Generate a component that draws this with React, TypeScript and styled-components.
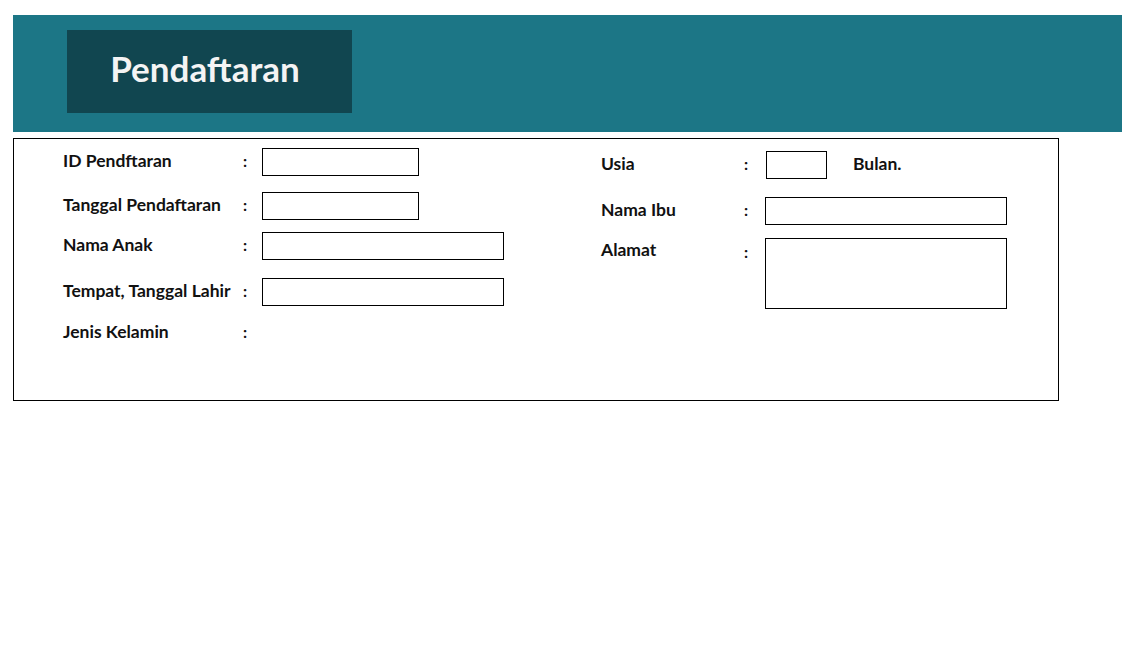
import React from "react";
import styled, { createGlobalStyle } from "styled-components";

const Global = createGlobalStyle`
  html, body { margin: 0; padding: 0; background: #ffffff; }
  body { font-family: "Lato", "Noto Sans", sans-serif; color: #111; }
  * { box-sizing: border-box; }
`;

const Page = styled.div`
  padding: 15px 0 0 13px;
  width: 1139px;
  height: 655px;
`;

const Header = styled.header`
  width: 1109px;
  height: 117px;
  background: #1c7686;
  padding: 15px 0 0 54px;
`;

const TitleBox = styled.div`
  width: 285px;
  height: 83px;
  background: #114650;
  display: flex;
  align-items: center;
  justify-content: center;
  padding: 0 9px 8px 0;
`;

const Title = styled.h1`
  margin: 0;
  font-family: "Lato", sans-serif;
  font-weight: 700;
  font-size: 35px;
  color: #f4f4f4;
`;

const FormBox = styled.section`
  margin-top: 6px;
  width: 1046px;
  height: 263px;
  border: 1px solid #000;
  display: grid;
  grid-template-columns: 538px 1fr;
  padding-left: 49px;
`;

const Column = styled.div`
  display: flex;
  flex-direction: column;
`;

const Row = styled.div<{ $gap: number; $top?: boolean; $h?: number }>`
  display: flex;
  align-items: ${(p) => (p.$top ? "flex-start" : "center")};
  margin-top: ${(p) => p.$gap}px;
  min-height: ${(p) => p.$h ?? 28}px;
`;

const Label = styled.span<{ $w: number; $pt?: number }>`
  width: ${(p) => p.$w}px;
  font-size: 17.5px;
  font-weight: 700;
  color: #111;
  white-space: nowrap;
  padding-top: ${(p) => p.$pt ?? 0}px;
  margin-top: -4px;
`;

const Colon = styled.span<{ $w: number; $pt?: number }>`
  width: ${(p) => p.$w}px;
  font-size: 16px;
  font-weight: 700;
  padding-top: ${(p) => p.$pt ?? 0}px;
  margin-top: -3px;
`;

const Field = styled.div<{ $w: number; $h?: number }>`
  width: ${(p) => p.$w}px;
  height: ${(p) => p.$h ?? 28}px;
  border: 1px solid #000;
  background: #fff;
`;

const Suffix = styled.span`
  margin-left: 26px;
  font-size: 17.5px;
  font-weight: 700;
  margin-top: -4px;
`;

export default function App() {
  return (
    <>
      <Global />
      <Page>
        <Header>
          <TitleBox>
            <Title>Pendaftaran</Title>
          </TitleBox>
        </Header>
        <FormBox>
          <Column>
            <Row $gap={9}>
              <Label $w={180}>ID Pendftaran</Label>
              <Colon $w={19}>:</Colon>
              <Field $w={157} />
            </Row>
            <Row $gap={16}>
              <Label $w={180}>Tanggal Pendaftaran</Label>
              <Colon $w={19}>:</Colon>
              <Field $w={157} />
            </Row>
            <Row $gap={12}>
              <Label $w={180}>Nama Anak</Label>
              <Colon $w={19}>:</Colon>
              <Field $w={242} />
            </Row>
            <Row $gap={18}>
              <Label $w={180}>Tempat, Tanggal Lahir</Label>
              <Colon $w={19}>:</Colon>
              <Field $w={242} />
            </Row>
            <Row $gap={13}>
              <Label $w={180}>Jenis Kelamin</Label>
              <Colon $w={19}>:</Colon>
            </Row>
          </Column>
          <Column>
            <Row $gap={12}>
              <Label $w={143}>Usia</Label>
              <Colon $w={22}>:</Colon>
              <Field $w={61} />
              <Suffix>Bulan.</Suffix>
            </Row>
            <Row $gap={18}>
              <Label $w={143}>Nama Ibu</Label>
              <Colon $w={21}>:</Colon>
              <Field $w={242} />
            </Row>
            <Row $gap={13} $top $h={71}>
              <Label $w={143} $pt={5}>Alamat</Label>
              <Colon $w={21} $pt={7}>:</Colon>
              <Field $w={242} $h={71} />
            </Row>
          </Column>
        </FormBox>
      </Page>
    </>
  );
}
